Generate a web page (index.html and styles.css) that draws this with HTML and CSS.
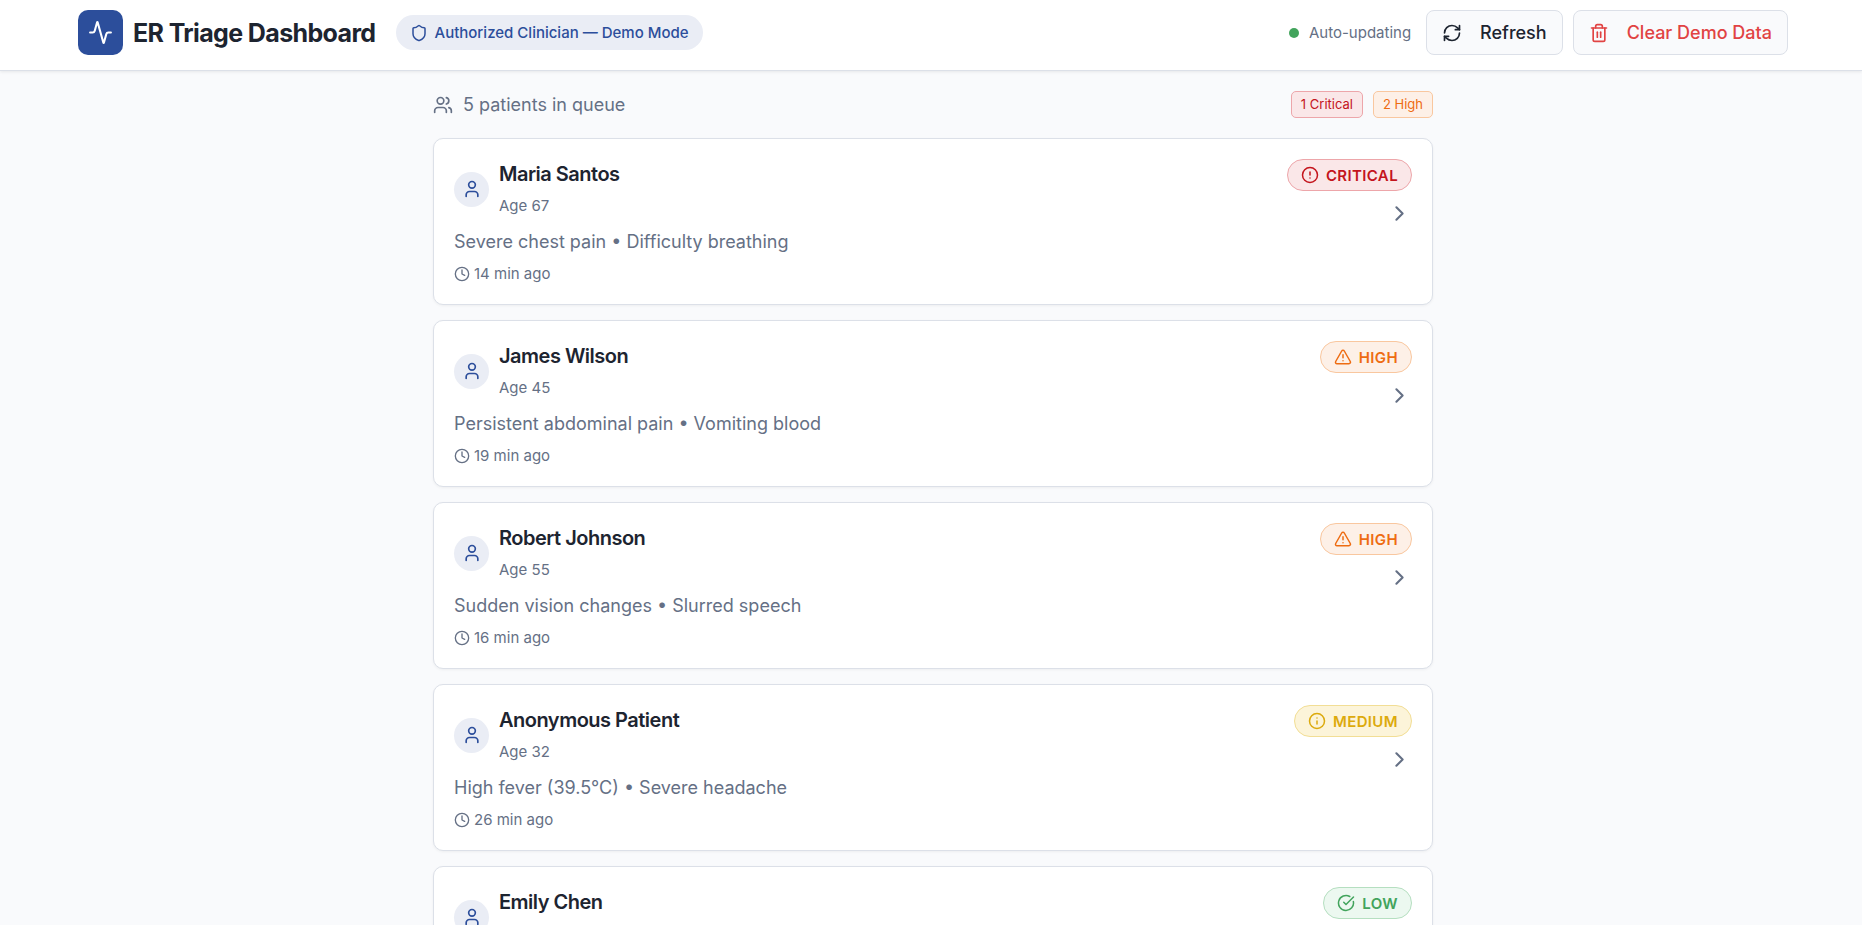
FILE: index.html
```html
<!DOCTYPE html>
<html lang="en">
<head>
    <meta charset="UTF-8">
    <meta name="viewport" content="width=device-width, initial-scale=1.0">
    <title>ER Triage Dashboard</title>
    <link rel="stylesheet" href="styles.css">
</head>
<body>
    <!-- Shared icons -->
    <svg class="icon-defs" aria-hidden="true">
        <symbol id="icon-user" viewBox="0 0 24 24">
            <path d="M19 21v-2a4 4 0 0 0-4-4H9a4 4 0 0 0-4 4v2"/>
            <circle cx="12" cy="7" r="4"/>
        </symbol>
        <symbol id="icon-clock" viewBox="0 0 24 24">
            <circle cx="12" cy="12" r="10"/>
            <path d="M12 6v6l4 2"/>
        </symbol>
        <symbol id="icon-chevron" viewBox="0 0 24 24">
            <path d="m9 18 6-6-6-6"/>
        </symbol>
        <symbol id="icon-warning" viewBox="0 0 24 24">
            <path d="m21.73 18-8-14a2 2 0 0 0-3.48 0l-8 14A2 2 0 0 0 4 21h16a2 2 0 0 0 1.73-3"/>
            <path d="M12 9v4"/>
            <path d="M12 17h.01"/>
        </symbol>
    </svg>

    <header class="header">
        <div class="brand">
            <div class="logo">
                <svg class="icon icon-lg" viewBox="0 0 24 24"><path d="M22 12h-2.48a2 2 0 0 0-1.93 1.46l-2.35 8.36a.25.25 0 0 1-.48 0L9.24 2.18a.25.25 0 0 0-.48 0l-2.35 8.36A2 2 0 0 1 4.49 12H2"/></svg>
            </div>
            <h1>ER Triage Dashboard</h1>
            <div class="mode-pill">
                <svg class="icon icon-md" viewBox="0 0 24 24"><path d="M20 13c0 5-3.5 7.5-7.66 8.95a1 1 0 0 1-.67-.01C7.5 20.5 4 18 4 13V6a1 1 0 0 1 1-1c2 0 4.5-1.2 6.24-2.72a1.17 1.17 0 0 1 1.52 0C14.51 3.81 17 5 19 5a1 1 0 0 1 1 1z"/></svg>
                <span>Authorized Clinician — Demo Mode</span>
            </div>
        </div>
        <div class="actions">
            <div class="status"><span class="dot"></span>Auto-updating</div>
            <button type="button" class="button">
                <svg class="icon" viewBox="0 0 24 24"><path d="M3 12a9 9 0 0 1 9-9 9.75 9.75 0 0 1 6.74 2.74L21 8"/><path d="M21 3v5h-5"/><path d="M21 12a9 9 0 0 1-9 9 9.75 9.75 0 0 1-6.74-2.74L3 16"/><path d="M8 16H3v5"/></svg>
                Refresh
            </button>
            <button type="button" class="button button-danger">
                <svg class="icon" viewBox="0 0 24 24"><path d="M3 6h18"/><path d="M19 6v14a2 2 0 0 1-2 2H7a2 2 0 0 1-2-2V6"/><path d="M8 6V4a2 2 0 0 1 2-2h4a2 2 0 0 1 2 2v2"/><path d="M10 11v6"/><path d="M14 11v6"/></svg>
                Clear Demo Data
            </button>
        </div>
    </header>

    <main class="queue">
        <div class="queue-header">
            <div class="queue-count">
                <svg class="icon" viewBox="0 0 24 24"><path d="M16 21v-2a4 4 0 0 0-4-4H6a4 4 0 0 0-4 4v2"/><circle cx="9" cy="7" r="4"/><path d="M22 21v-2a4 4 0 0 0-3-3.87"/><path d="M16 3.13a4 4 0 0 1 0 7.75"/></svg>
                <span>5 patients in queue</span>
            </div>
            <div class="tags">
                <span class="tag critical">1 Critical</span>
                <span class="tag high">2 High</span>
            </div>
        </div>

        <article class="card">
            <div class="card-body">
                <div class="patient">
                    <div class="avatar"><svg class="icon"><use href="#icon-user"/></svg></div>
                    <div>
                        <h2>Maria Santos</h2>
                        <p class="age">Age 67</p>
                    </div>
                </div>
                <p class="symptoms">Severe chest pain • Difficulty breathing</p>
                <p class="time"><svg class="icon icon-sm"><use href="#icon-clock"/></svg>14 min ago</p>
            </div>
            <div class="card-side">
                <span class="badge critical"><svg class="icon icon-md" viewBox="0 0 24 24"><circle cx="12" cy="12" r="10"/><path d="M12 8v4"/><path d="M12 16h.01"/></svg>CRITICAL</span>
                <svg class="icon icon-lg"><use href="#icon-chevron"/></svg>
            </div>
        </article>

        <article class="card">
            <div class="card-body">
                <div class="patient">
                    <div class="avatar"><svg class="icon"><use href="#icon-user"/></svg></div>
                    <div>
                        <h2>James Wilson</h2>
                        <p class="age">Age 45</p>
                    </div>
                </div>
                <p class="symptoms">Persistent abdominal pain • Vomiting blood</p>
                <p class="time"><svg class="icon icon-sm"><use href="#icon-clock"/></svg>19 min ago</p>
            </div>
            <div class="card-side">
                <span class="badge high"><svg class="icon icon-md"><use href="#icon-warning"/></svg>HIGH</span>
                <svg class="icon icon-lg"><use href="#icon-chevron"/></svg>
            </div>
        </article>

        <article class="card">
            <div class="card-body">
                <div class="patient">
                    <div class="avatar"><svg class="icon"><use href="#icon-user"/></svg></div>
                    <div>
                        <h2>Robert Johnson</h2>
                        <p class="age">Age 55</p>
                    </div>
                </div>
                <p class="symptoms">Sudden vision changes • Slurred speech</p>
                <p class="time"><svg class="icon icon-sm"><use href="#icon-clock"/></svg>16 min ago</p>
            </div>
            <div class="card-side">
                <span class="badge high"><svg class="icon icon-md"><use href="#icon-warning"/></svg>HIGH</span>
                <svg class="icon icon-lg"><use href="#icon-chevron"/></svg>
            </div>
        </article>

        <article class="card">
            <div class="card-body">
                <div class="patient">
                    <div class="avatar"><svg class="icon"><use href="#icon-user"/></svg></div>
                    <div>
                        <h2>Anonymous Patient</h2>
                        <p class="age">Age 32</p>
                    </div>
                </div>
                <p class="symptoms">High fever (39.5°C) • Severe headache</p>
                <p class="time"><svg class="icon icon-sm"><use href="#icon-clock"/></svg>26 min ago</p>
            </div>
            <div class="card-side">
                <span class="badge medium"><svg class="icon icon-md" viewBox="0 0 24 24"><circle cx="12" cy="12" r="10"/><path d="M12 16v-4"/><path d="M12 8h.01"/></svg>MEDIUM</span>
                <svg class="icon icon-lg"><use href="#icon-chevron"/></svg>
            </div>
        </article>

        <article class="card">
            <div class="card-body">
                <div class="patient">
                    <div class="avatar"><svg class="icon"><use href="#icon-user"/></svg></div>
                    <div>
                        <h2>Emily Chen</h2>
                    </div>
                </div>
            </div>
            <div class="card-side">
                <span class="badge low"><svg class="icon icon-md" viewBox="0 0 24 24"><path d="M21.8 10A10 10 0 1 1 17 3.34"/><path d="m9 11 3 3L22 4"/></svg>LOW</span>
                <svg class="icon icon-lg"><use href="#icon-chevron"/></svg>
            </div>
        </article>
    </main>
</body>
</html>
```

FILE: styles.css
```css
* {
    box-sizing: border-box;
}

html {
    scrollbar-width: none;
}

body {
    margin: 0;
    background-color: #f9fafc;
    font-family: Inter, 'Liberation Sans', sans-serif;
    font-size: 18px;
    color: #1d2430;
}

h1, h2, p {
    margin: 0;
}

.icon-defs {
    display: none;
}

.icon {
    width: 20px;
    height: 20px;
    flex-shrink: 0;
    fill: none;
    stroke: currentColor;
    stroke-width: 2;
    stroke-linecap: round;
    stroke-linejoin: round;
}

.icon-sm {
    width: 16px;
    height: 16px;
}

.icon-md {
    width: 18px;
    height: 18px;
}

.icon-lg {
    width: 25px;
    height: 25px;
}

/* Header */
.header {
    display: flex;
    justify-content: space-between;
    align-items: center;
    padding: 10px 74px 15px 78px;
    background-color: #ffffff;
    border-bottom: 1px solid #dce0e8;
    box-shadow: 0 1px 3px rgba(0, 0, 0, 0.08);
}

.brand,
.actions {
    display: flex;
    align-items: center;
    gap: 10px;
}

.logo {
    display: flex;
    justify-content: center;
    align-items: center;
    width: 45px;
    height: 45px;
    border-radius: 10px;
    background-color: #2c4e9b;
    color: #ffffff;
}

h1 {
    font-size: 25px;
    font-weight: 700;
    line-height: 30px;
    letter-spacing: -0.025em;
}

.mode-pill {
    display: flex;
    align-items: center;
    gap: 7px;
    height: 35px;
    margin-left: 10px;
    padding: 0 14px;
    border-radius: 18px;
    background-color: #eaedf5;
    color: #2c4e9b;
    font-size: 15px;
    font-weight: 500;
}

.status {
    display: flex;
    align-items: center;
    gap: 10px;
    margin-right: 5px;
    color: #657085;
    font-size: 15px;
}

.dot {
    width: 10px;
    height: 10px;
    border-radius: 50%;
    background-color: #42a45c;
}

.button {
    display: flex;
    align-items: center;
    gap: 18px;
    height: 45px;
    padding: 0 15px;
    border: 1px solid #dce0e8;
    border-radius: 8px;
    background-color: #f9fafc;
    color: #1d2430;
    font-family: inherit;
    font-size: 18px;
    font-weight: 500;
    cursor: pointer;
}

.button:hover {
    background-color: #eef1f6;
}

.button-danger {
    color: #e14343;
}

/* Patient queue */
.queue {
    display: flex;
    flex-direction: column;
    gap: 15px;
    max-width: 1044px;
    margin: 0 auto;
    padding: 20px 20px 20px 24px;
}

.queue-header {
    display: flex;
    justify-content: space-between;
    align-items: center;
    margin-bottom: 5px;
}

.queue-count {
    display: flex;
    align-items: center;
    gap: 10px;
    color: #657085;
}

.tags {
    display: flex;
    gap: 10px;
}

.tag {
    padding: 0 9px;
    border: 1px solid;
    border-radius: 5px;
    font-size: 13px;
    line-height: 25px;
}

.card {
    display: flex;
    justify-content: space-between;
    min-height: 167px;
    padding: 20px;
    border: 1px solid #dce0e8;
    border-radius: 10px;
    background-color: #ffffff;
    box-shadow: 0 1px 3px rgba(0, 0, 0, 0.05);
}

.card-body {
    display: flex;
    flex-direction: column;
    gap: 10px;
    color: #657085;
}

.patient {
    display: flex;
    align-items: center;
    gap: 10px;
    min-height: 60px;
}

.patient > div:last-child {
    align-self: flex-start;
}

.avatar {
    display: flex;
    justify-content: center;
    align-items: center;
    width: 35px;
    height: 35px;
    border-radius: 50%;
    background-color: #eaedf5;
    color: #2c4e9b;
}

h2 {
    color: #1d2430;
    font-size: 20px;
    font-weight: 600;
    line-height: 30px;
    letter-spacing: -0.025em;
}

.age {
    margin-top: 4px;
    font-size: 15px;
    line-height: 26px;
}

.symptoms {
    line-height: 25px;
}

.time {
    display: flex;
    align-items: center;
    gap: 4px;
    font-size: 15px;
    line-height: 20px;
}

.card-side {
    display: flex;
    flex-direction: column;
    align-items: flex-end;
    gap: 10px;
    color: #657085;
}

.badge {
    display: flex;
    align-items: center;
    gap: 7px;
    height: 32px;
    padding: 0 13px;
    border: 1px solid;
    border-radius: 16px;
    font-size: 15px;
    font-weight: 600;
    letter-spacing: 0.025em;
}

/* Triage levels */
.critical {
    color: #c4141c;
    border-color: #eda6aa;
    background-color: #fae7e8;
}

.high {
    color: #ee6c12;
    border-color: #f9c79f;
    background-color: #fdf0e7;
}

.medium {
    color: #dcaa0c;
    border-color: #f2de95;
    background-color: #fcf4d9;
}

.low {
    color: #42a45c;
    border-color: #b5dfc0;
    background-color: #ecf8f0;
}
```
